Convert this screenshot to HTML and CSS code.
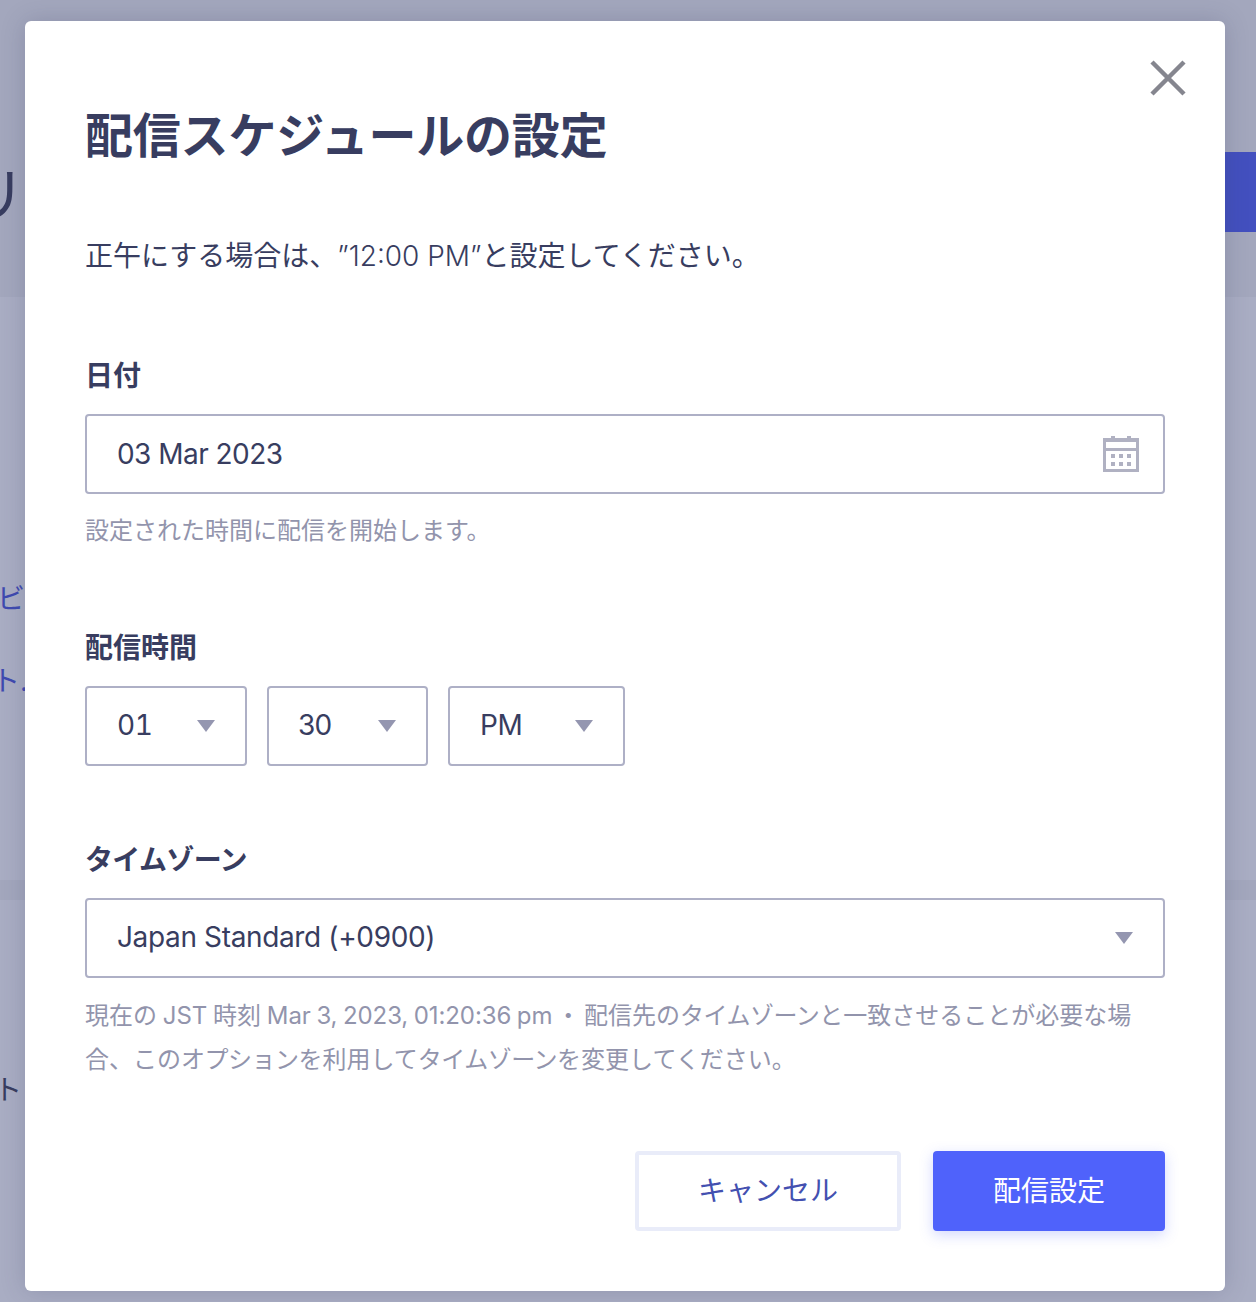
FILE: index.html
```html
<!DOCTYPE html>
<html lang="ja">
<head>
<meta charset="utf-8">
<title>配信スケジュールの設定</title>
<link rel="stylesheet" href="styles.css">
</head>
<body>
<div class="page">
  <header class="page-head">
    <span class="page-title">リ</span>
    <span class="page-action"></span>
  </header>
  <section class="band band-main">
    <span class="link link-a">ビ</span>
    <span class="link link-b">ト.</span>
  </section>
  <section class="band band-next">
    <span class="tail">ト</span>
  </section>
</div>

<div class="modal" role="dialog">
  <svg class="close" viewBox="0 0 36 36" width="36" height="36" aria-label="閉じる"><path d="M2 2 L34 34 M34 2 L2 34"/></svg>
  <h1 class="title">配信スケジュールの設定</h1>
  <p class="lead">正午にする場合は、<span class="latin">”12:00 PM”</span>と設定してください。</p>

  <label class="label label-date">日付</label>
  <div class="field field-wide">
    <span class="value value-date">03 Mar 2023</span>
    <svg class="cal" viewBox="0 0 36 36" width="36" height="36">
      <path class="cal-frame" fill-rule="evenodd" d="M0 2H36V36H0ZM3 6V12H33V6ZM3 15V33H33V15Z"/>
      <path class="cal-dots" d="M8 0h4v5H8zM24 0h4v5h-4zM8 18h4v4H8zM16 18h4v4h-4zM24 18h4v4h-4zM8 26h4v4H8zM16 26h4v4h-4zM24 26h4v4h-4z"/>
    </svg>
  </div>
  <p class="hint hint-date">設定された時間に配信を開始します。</p>

  <label class="label label-time">配信時間</label>
  <div class="time-row">
    <div class="field field-hour"><span class="value value-select value-tabular">01</span><i class="arrow"></i></div>
    <div class="field field-min"><span class="value value-select value-min">30</span><i class="arrow"></i></div>
    <div class="field field-ampm"><span class="value value-select">PM</span><i class="arrow"></i></div>
  </div>

  <label class="label label-zone">タイムゾーン</label>
  <div class="field field-wide">
    <span class="value value-select">Japan Standard (+0900)</span><i class="arrow"></i>
  </div>
  <p class="hint hint-zone">現在の JST 時刻 <span class="latin-tight">Mar 3, 2023, 01:20:36 pm</span><span class="sep"> ・ </span>配信先の<span class="kana">タイムゾーン</span>と一致させることが必要な場合、この<span class="kana">オプション</span>を利用して<span class="kana">タイムゾーン</span>を変更してください。</p>

  <div class="actions">
    <button class="btn btn-cancel">キャンセル</button>
    <button class="btn btn-primary">配信設定</button>
  </div>
</div>
</body>
</html>
```
FILE: styles.css
```css
* { box-sizing: border-box; }
html, body { margin: 0; padding: 0; }
body {
  width: 1256px;
  height: 1302px;
  overflow: hidden;
  position: relative;
  background: #a3a7bd;
  font-family: Inter, "Noto Sans CJK JP", sans-serif;
  color: #383d60;
  text-spacing-trim: space-all;
}
.page { height: 1302px; overflow: hidden; }
.page-head {
  height: 297px;
  display: flex;
  justify-content: space-between;
  align-items: flex-start;
  padding-top: 152px;
}
.page-title {
  font-size: 60px;
  line-height: 80px;
  margin-top: 4px;
  margin-left: -34px;
  color: #383d60;
}
.page-action {
  width: 300px;
  height: 80px;
  margin-right: -269px;
  background: #4350bf;
}
.band { background: #a9adc3; display: flex; flex-direction: column; align-items: flex-start; }
.band-main { height: 583px; padding-top: 282px; margin-bottom: 20px; }
.band-next { height: 402px; padding-top: 170px; }
.link { font-size: 28px; line-height: 40px; color: #3f4ab0; white-space: nowrap; }
.link-a { margin-left: -3px; }
.link-b { margin-top: 42px; margin-left: -8px; }
.tail { font-size: 28px; line-height: 40px; color: #383d60; margin-left: -6px; }

.modal {
  position: absolute;
  left: 25px;
  top: 21px;
  width: 1200px;
  height: 1270px;
  padding: 79px 60px 60px;
  background: #fff;
  border-radius: 6px;
  box-shadow: 0 0 24px rgba(56, 61, 96, 0.22);
}
.close {
  position: absolute;
  left: 1125px;
  top: 39px;
  fill: none;
  stroke: #85868f;
  stroke-width: 4.5;
}
.title {
  margin: 0;
  font-size: 48px;
  line-height: 72px;
  font-weight: 700;
  letter-spacing: -0.2px;
  color: #383d60;
  white-space: nowrap;
}
.lead {
  margin: 62px 0 0;
  font-size: 28px;
  line-height: 44px;
  font-weight: 400;
  color: #383d60;
  white-space: nowrap;
}
.latin { font-weight: 300; }
.label {
  display: block;
  font-size: 28px;
  line-height: 40px;
  font-weight: 700;
  color: #383d60;
}
.label-date { margin-top: 78px; }
.label-time { margin-top: 75px; }
.label-zone { margin-top: 74px; letter-spacing: -0.7px; }
.field {
  height: 80px;
  margin-top: 18px;
  display: flex;
  align-items: center;
  justify-content: space-between;
  padding: 0 30px;
  border: 2px solid #aeb0c6;
  border-radius: 4px;
  background: #fff;
}
.field-wide { width: 1080px; }
.field-wide .cal { margin-right: -6px; }
.value {
  font-size: 28px;
  line-height: 38px;
  letter-spacing: -0.36px;
  color: #383d60;
  white-space: nowrap;
}
.value-date { letter-spacing: -0.54px; }
.value-select { margin-top: -2px; }
.value-tabular { font-feature-settings: "tnum"; }
.value-min { margin-left: -1px; letter-spacing: -0.8px; }
.cal-frame { fill: #b0b1c2; }
.cal-dots { fill: #b0b1c2; }
.arrow {
  width: 0;
  height: 0;
  border-left: 9px solid transparent;
  border-right: 9px solid transparent;
  border-top: 12px solid #9496b0;
}
.time-row { display: flex; gap: 20px; margin-top: 18px; }
.time-row .field { margin-top: 0; }
.field-hour { width: 162px; }
.field-min { width: 161px; }
.field-ampm { width: 177px; }
.hint {
  margin: 0;
  font-size: 24px;
  line-height: 44px;
  color: #9294ac;
}
.hint-date { margin-top: 15px; }
.hint-zone { margin-top: 16px; width: 1080px; word-spacing: -1px; }
.latin-tight { letter-spacing: -0.1px; }
.sep { margin: 0 -2px; }
.kana { letter-spacing: -0.5px; }
.actions { display: flex; justify-content: flex-end; gap: 32px; margin-top: 69px; }
.btn {
  height: 80px;
  border-radius: 4px;
  font-family: inherit;
  font-size: 28px;
  line-height: 40px;
  padding: 0;
}
.btn-cancel {
  width: 266px;
  background: #fff;
  border: 4px solid #e9ecf9;
  color: #4350b0;
}
.btn-primary {
  width: 232px;
  background: #4f62fb;
  border: 0;
  color: #fff;
  box-shadow: 0 4px 14px rgba(79, 98, 251, 0.25);
}
```
